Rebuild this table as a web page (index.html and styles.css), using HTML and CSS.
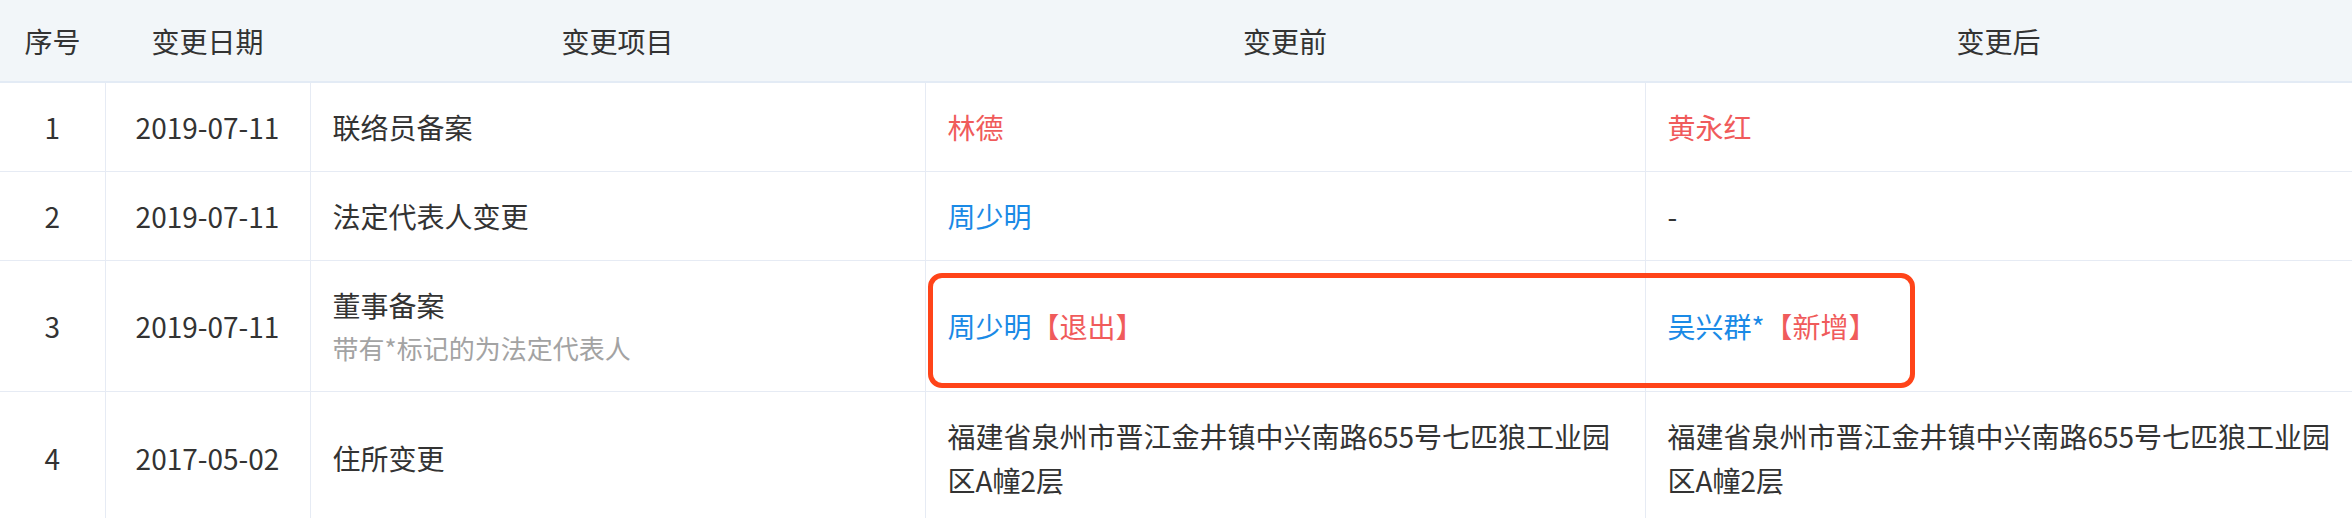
FILE: index.html
```html
<!DOCTYPE html>
<html lang="zh-CN">
<head>
  <meta charset="UTF-8">
  <title>变更记录</title>
  <link rel="stylesheet" href="styles.css">
</head>
<body>

<div class="wrap">
  <table class="change-table">
    <colgroup>
      <col class="c-no">
      <col class="c-date">
      <col class="c-item">
      <col class="c-before">
      <col class="c-after">
    </colgroup>
    <thead>
      <tr>
        <th>序号</th>
        <th>变更日期</th>
        <th>变更项目</th>
        <th>变更前</th>
        <th>变更后</th>
      </tr>
    </thead>
    <tbody>
      <tr>
        <td class="center">1</td>
        <td class="center">2019-07-11</td>
        <td>联络员备案</td>
        <td><span class="red">林德</span></td>
        <td><span class="red">黄永红</span></td>
      </tr>
      <tr>
        <td class="center">2</td>
        <td class="center">2019-07-11</td>
        <td>法定代表人变更</td>
        <td><span class="blue">周少明</span></td>
        <td>-</td>
      </tr>
      <tr>
        <td class="center">3</td>
        <td class="center">2019-07-11</td>
        <td>
          <div>董事备案</div>
          <div class="note">带有*标记的为法定代表人</div>
        </td>
        <td><span class="blue">周少明</span><span class="red">【退出】</span></td>
        <td><span class="blue">吴兴群*</span><span class="red">【新增】</span></td>
      </tr>
      <tr>
        <td class="center">4</td>
        <td class="center">2017-05-02</td>
        <td>住所变更</td>
        <td>福建省泉州市晋江金井镇中兴南路655号七匹狼工业园区A幢2层</td>
        <td>福建省泉州市晋江金井镇中兴南路655号七匹狼工业园区A幢2层</td>
      </tr>
    </tbody>
  </table>

  <!-- highlight drawn over row 3 -->
  <div class="mark"></div>
</div>

</body>
</html>
```

FILE: styles.css
```css
body {
  margin: 0;
  background: #ffffff;
  font-family: "Noto Sans CJK SC", "Noto Sans", sans-serif;
  color: #333333;
}
.wrap {
  position: relative;
  width: 2352px;
}
.change-table {
  width: 2352px;
  border-collapse: collapse;
  table-layout: fixed;
  font-size: 28px;
  line-height: 44px;
}
.c-no { width: 105px; }
.c-date { width: 205px; }
.c-item { width: 615px; }
.c-before { width: 720px; }
.c-after { width: 707px; }
th {
  background: #f2f6f9;
  font-weight: normal;
  text-align: center;
  height: 81px;
  padding: 0;
  border-bottom: 2px solid #e3ebf5;
}
td {
  padding: 22px 14px 22px 22px;
  border: 1px solid #e6ebf4;
  vertical-align: middle;
  text-align: left;
}
tr td:first-child { border-left: none; }
tr td:last-child { border-right: none; }
td.center {
  text-align: center;
  padding-left: 0;
  padding-right: 0;
}
.red { color: #f05b5b; }
.blue { color: #1a8ae6; }
.note {
  font-size: 26px;
  line-height: 42px;
  color: #a3a3a3;
}
.mark {
  position: absolute;
  left: 928px;
  top: 273px;
  width: 987px;
  height: 115px;
  box-sizing: border-box;
  border: 5px solid #ff4419;
  border-radius: 14px;
}
```
